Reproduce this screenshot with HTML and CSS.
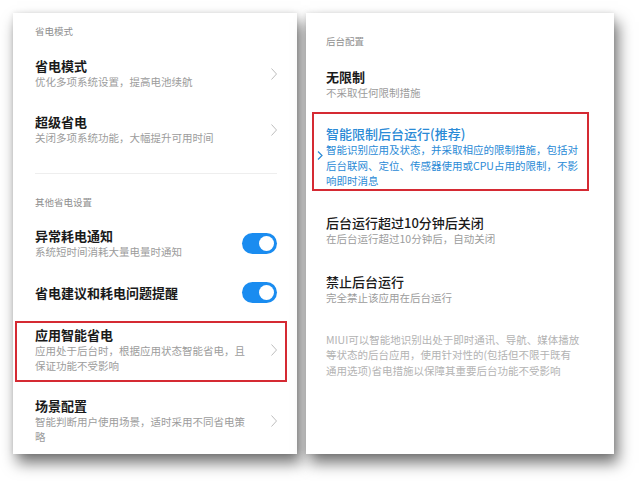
FILE: index.html
```html
<!DOCTYPE html>
<html lang="zh-CN">
<head>
    <meta charset="UTF-8">
    <meta name="viewport" content="width=device-width, initial-scale=1.0">
    <title>省电设置</title>
    <link rel="stylesheet" href="styles.css">
</head>
<body>
    <div class="page">
        <!-- 左侧：省电设置 -->
        <section class="screen screen-left">
            <div class="group-label">省电模式</div>
            <div class="item">
                <div class="item-text">
                    <div class="item-title">省电模式</div>
                    <div class="item-desc">优化多项系统设置，提高电池续航</div>
                </div>
                <svg class="chevron" viewBox="0 0 6 12"><polyline points="0.5,0.5 5.5,6 0.5,11.5"/></svg>
            </div>
            <div class="item">
                <div class="item-text">
                    <div class="item-title">超级省电</div>
                    <div class="item-desc">关闭多项系统功能，大幅提升可用时间</div>
                </div>
                <svg class="chevron" viewBox="0 0 6 12"><polyline points="0.5,0.5 5.5,6 0.5,11.5"/></svg>
            </div>

            <div class="divider"></div>

            <div class="group-label group-label-second">其他省电设置</div>
            <div class="item">
                <div class="item-text">
                    <div class="item-title">异常耗电通知</div>
                    <div class="item-desc">系统短时间消耗大量电量时通知</div>
                </div>
                <span class="switch"><span class="knob"></span></span>
            </div>
            <div class="item item-single">
                <div class="item-text">
                    <div class="item-title">省电建议和耗电问题提醒</div>
                </div>
                <span class="switch"><span class="knob"></span></span>
            </div>

            <div class="item item-marked">
                <div class="item-text">
                    <div class="item-title">应用智能省电</div>
                    <div class="item-desc">应用处于后台时，根据应用状态智能省电，且保证功能不受影响</div>
                </div>
                <svg class="chevron" viewBox="0 0 6 12"><polyline points="0.5,0.5 5.5,6 0.5,11.5"/></svg>
            </div>
            <div class="item item-after-mark">
                <div class="item-text">
                    <div class="item-title">场景配置</div>
                    <div class="item-desc">智能判断用户使用场景，适时采用不同省电策略</div>
                </div>
                <svg class="chevron" viewBox="0 0 6 12"><polyline points="0.5,0.5 5.5,6 0.5,11.5"/></svg>
            </div>
        </section>

        <!-- 右侧：后台配置 -->
        <section class="screen screen-right">
            <div class="group-label">后台配置</div>
            <div class="option option-first">
                <div class="option-title">无限制</div>
                <div class="option-desc">不采取任何限制措施</div>
            </div>
            <div class="option-marked">
                <svg class="chevron-blue" viewBox="0 0 5 9"><polyline points="0.5,0.5 4.5,4.5 0.5,8.5"/></svg>
                <div class="option-text">
                    <div class="option-title">智能限制后台运行(推荐)</div>
                    <div class="option-desc">智能识别应用及状态，并采取相应的限制措施，包括对后台联网、定位、传感器使用或CPU占用的限制，不影响即时消息</div>
                </div>
            </div>
            <div class="option option-third">
                <div class="option-title">后台运行超过10分钟后关闭</div>
                <div class="option-desc">在后台运行超过10分钟后，自动关闭</div>
            </div>
            <div class="option option-fourth">
                <div class="option-title">禁止后台运行</div>
                <div class="option-desc">完全禁止该应用在后台运行</div>
            </div>
            <p class="footnote">MIUI可以智能地识别出处于即时通讯、导航、媒体播放等状态的后台应用，使用针对性的(包括但不限于既有通用选项)省电措施以保障其重要后台功能不受影响</p>
        </section>
    </div>
</body>
</html>
```

FILE: styles.css
```css
* {
    margin: 0;
    padding: 0;
    box-sizing: border-box;
}

html,
body {
    background-color: #fff;
}

body {
    font-family: "Noto Sans CJK SC", "Noto Sans", sans-serif;
    color: #1c1c1c;
    min-height: 481px;
}

.page {
    display: flex;
    align-items: flex-start;
    gap: 9px;
    padding: 13px 0 27px 13px;
}

.screen {
    background: #fff;
    height: 441px;
    flex-shrink: 0;
    box-shadow: 4px 9px 14px rgba(0, 0, 0, 0.55), 0 0 5px rgba(0, 0, 0, 0.1);
}

.screen-left {
    width: 284px;
    padding: 11px 20px 0 22px;
}

.screen-right {
    width: 308px;
    padding: 21px 25px 0 20px;
}

.group-label {
    font-size: 9.5px;
    line-height: 14px;
    color: #8f8f8f;
    margin-bottom: 8px;
}

.group-label-second {
    margin-top: 21px;
    margin-bottom: 7px;
}

/* 左侧列表 */
.item {
    display: flex;
    align-items: center;
    justify-content: space-between;
    padding: 12px 0 13px;
}

.item-single {
    padding: 10px 0;
}

.item-text {
    width: 214px;
}

.item-title {
    font-size: 13px;
    line-height: 16px;
    font-weight: bold;
    color: #1a1a1a;
}

.item-desc {
    font-size: 10.5px;
    line-height: 15px;
    color: #9c9c9c;
}

.chevron {
    width: 6px;
    height: 12px;
    fill: none;
    stroke: #bdbdbd;
    stroke-width: 1;
}

.switch {
    width: 36px;
    height: 21px;
    border-radius: 11px;
    background-color: #1a8cf0;
    display: flex;
    align-items: center;
    justify-content: flex-end;
    padding-right: 3px;
}

.knob {
    width: 15px;
    height: 15px;
    border-radius: 50%;
    background-color: #fff;
}

.divider {
    height: 1px;
    background-color: #eeeeee;
    margin-top: 15px;
}

.item-marked {
    margin: 8px -10px 0 -20px;
    padding: 4px 8px 7px 18px;
    border: 2px solid #d52a33;
}

.item-after-mark {
    margin-top: 4px;
}

/* 右侧选项 */
.option-title {
    font-size: 13px;
    line-height: 16px;
    font-weight: 500;
    color: #1a1a1a;
}

.option-desc {
    font-size: 10.5px;
    line-height: 15px;
    color: #9c9c9c;
}

.option-first {
    padding: 13px 0 12px;
}

.option-first .option-title {
    font-weight: bold;
}

.option-marked {
    display: flex;
    gap: 3px;
    margin-left: -14px;
    padding: 11px 0 0 3px;
    border: 2px solid #d52a33;
}

.option-marked .option-title {
    line-height: 17px;
    color: #2a8ad6;
}

.option-marked .option-desc {
    line-height: 15.5px;
    color: #2a8ad6;
}

.option-text {
    width: 258px;
}

.chevron-blue {
    width: 6px;
    height: 9px;
    margin-top: 26px;
    flex-shrink: 0;
    fill: none;
    stroke: #2a8ad6;
    stroke-width: 1.2;
}

.option-third {
    padding: 24px 0 14px;
}

.option-fourth {
    padding-top: 14px;
}

.footnote {
    margin-top: 27px;
    width: 254px;
    font-size: 10.5px;
    line-height: 15.5px;
    color: #b3b3b3;
}
```
